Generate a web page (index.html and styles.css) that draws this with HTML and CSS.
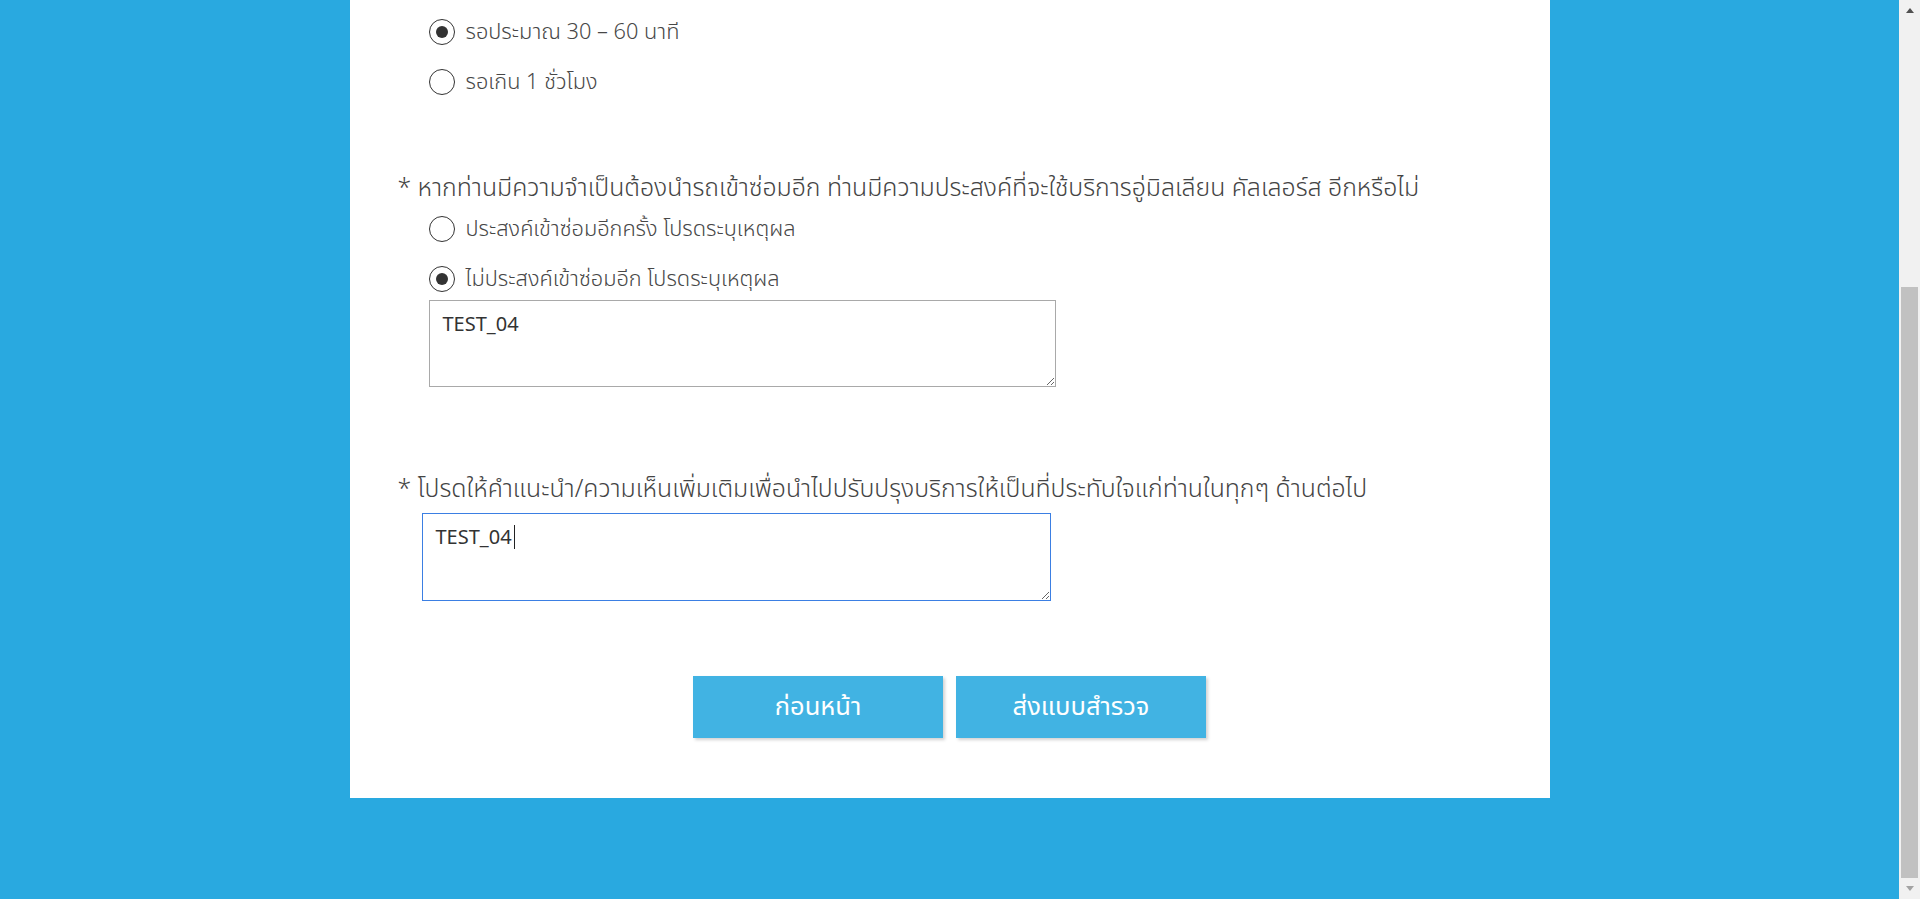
FILE: index.html
```html
<!DOCTYPE html>
<html lang="th">
<head>
<meta charset="utf-8">
<title>แบบสำรวจ</title>
<link rel="stylesheet" href="styles.css">
</head>
<body>
<div class="viewport">
  <div class="page">
    <div class="card">
      <div class="options first">
        <label class="option"><span class="radio checked"></span><span class="label">รอประมาณ 30 – 60 นาที</span></label>
        <label class="option"><span class="radio"></span><span class="label">รอเกิน 1 ชั่วโมง</span></label>
      </div>

      <div class="question q2">
        <p class="qtext">* หากท่านมีความจำเป็นต้องนำรถเข้าซ่อมอีก ท่านมีความประสงค์ที่จะใช้บริการอู่มิลเลียน คัลเลอร์ส อีกหรือไม่</p>
        <div class="options">
          <label class="option"><span class="radio"></span><span class="label">ประสงค์เข้าซ่อมอีกครั้ง โปรดระบุเหตุผล</span></label>
          <label class="option"><span class="radio checked"></span><span class="label">ไม่ประสงค์เข้าซ่อมอีก โปรดระบุเหตุผล</span></label>
          <textarea class="answer reason">TEST_04</textarea>
        </div>
      </div>

      <div class="question q3">
        <p class="qtext">* โปรดให้คำแนะนำ/ความเห็นเพิ่มเติมเพื่อนำไปปรับปรุงบริการให้เป็นที่ประทับใจแก่ท่านในทุกๆ ด้านต่อไป</p>
        <div class="comment-wrap">
          <textarea class="answer comment focused">TEST_04</textarea>
          <span class="caret"></span>
        </div>
      </div>

      <div class="actions">
        <button class="btn">ก่อนหน้า</button>
        <button class="btn">ส่งแบบสำรวจ</button>
      </div>
    </div>
  </div>
  <div class="scrollbar">
    <div class="arrow up"></div>
    <div class="track">
      <div class="thumb"></div>
    </div>
    <div class="arrow down"></div>
  </div>
</div>
</body>
</html>
```
FILE: styles.css
```css
html, body {
  margin: 0;
  padding: 0;
}
body {
  font-family: "Noto Sans Thai", "Noto Sans", "DejaVu Sans", sans-serif;
  font-weight: 300;
  color: #444;
  overflow: hidden;
}
.viewport {
  display: flex;
  height: 899px;
  overflow: hidden;
}
.page {
  flex: 1;
  background: #29a9e0;
  display: flex;
  justify-content: center;
  align-items: flex-start;
}
.card {
  width: 1200px;
  height: 798px;
  box-sizing: border-box;
  background: #fff;
  padding: 0 0 0 48px;
}
.options {
  display: flex;
  flex-direction: column;
  padding-left: 31px;
}
.options.first {
  padding-top: 19px;
}
.option {
  display: flex;
  align-items: center;
  height: 26px;
  margin-bottom: 24px;
  font-size: 21.75px;
  color: #474747;
}
.radio {
  box-sizing: border-box;
  width: 26px;
  height: 26px;
  border: 1.5px solid #333;
  border-radius: 50%;
  margin-right: 11px;
  display: flex;
  align-items: center;
  justify-content: center;
  flex: none;
}
.radio.checked::after {
  content: "";
  width: 12px;
  height: 12px;
  border-radius: 50%;
  background: #333;
}
.question .qtext {
  margin: 0;
  font-size: 24.8px;
  line-height: 30px;
}
.q2 {
  margin-top: 55px;
}
.q2 .options {
  margin-top: 12px;
}
.q2 .option:last-of-type {
  margin-bottom: 8px;
}
.answer {
  box-sizing: border-box;
  width: 627px;
  height: 87px;
  border: 1px solid #a9a9a9;
  border-radius: 0;
  padding: 9px 13px;
  font-family: "Noto Sans", "DejaVu Sans", sans-serif;
  font-weight: 400;
  font-size: 20px;
  line-height: 27px;
  color: #333;
  background: #fff;
  display: block;
}
.q3 {
  margin-top: 88px;
}
.comment-wrap {
  position: relative;
  padding: 8px 0 0 24px;
}
.answer.comment {
  width: 629px;
  height: 88px;
}
.answer.focused {
  border-color: #3b7fe3;
  outline: none;
}
.caret {
  position: absolute;
  left: 116px;
  top: 20px;
  width: 1px;
  height: 24px;
  background: #222;
}
.actions {
  display: flex;
  justify-content: center;
  gap: 13px;
  margin: 75px 0 0 -48px;
}
.btn {
  width: 250px;
  height: 62px;
  border: 0;
  background: #41b3e3;
  color: #fff;
  font-family: "Noto Sans Thai", "Noto Sans", sans-serif;
  font-weight: 400;
  font-size: 25.5px;
  box-shadow: 2px 2px 3px rgba(0, 0, 0, 0.18);
  cursor: pointer;
}
.scrollbar {
  width: 21px;
  background: #f1f1f1;
  display: flex;
  flex-direction: column;
}
.arrow {
  height: 21px;
  display: flex;
  align-items: center;
  justify-content: center;
  flex: none;
}
.arrow::after {
  content: "";
  width: 0;
  height: 0;
  border-left: 4.5px solid transparent;
  border-right: 4.5px solid transparent;
}
.arrow.up::after {
  border-bottom: 5px solid #505050;
}
.arrow.down::after {
  border-top: 5px solid #a3a3a3;
}
.track {
  flex: 1;
  padding: 266px 2px 0;
  display: flex;
  flex-direction: column;
}
.thumb {
  height: 591px;
  background: #c1c1c1;
}
```
